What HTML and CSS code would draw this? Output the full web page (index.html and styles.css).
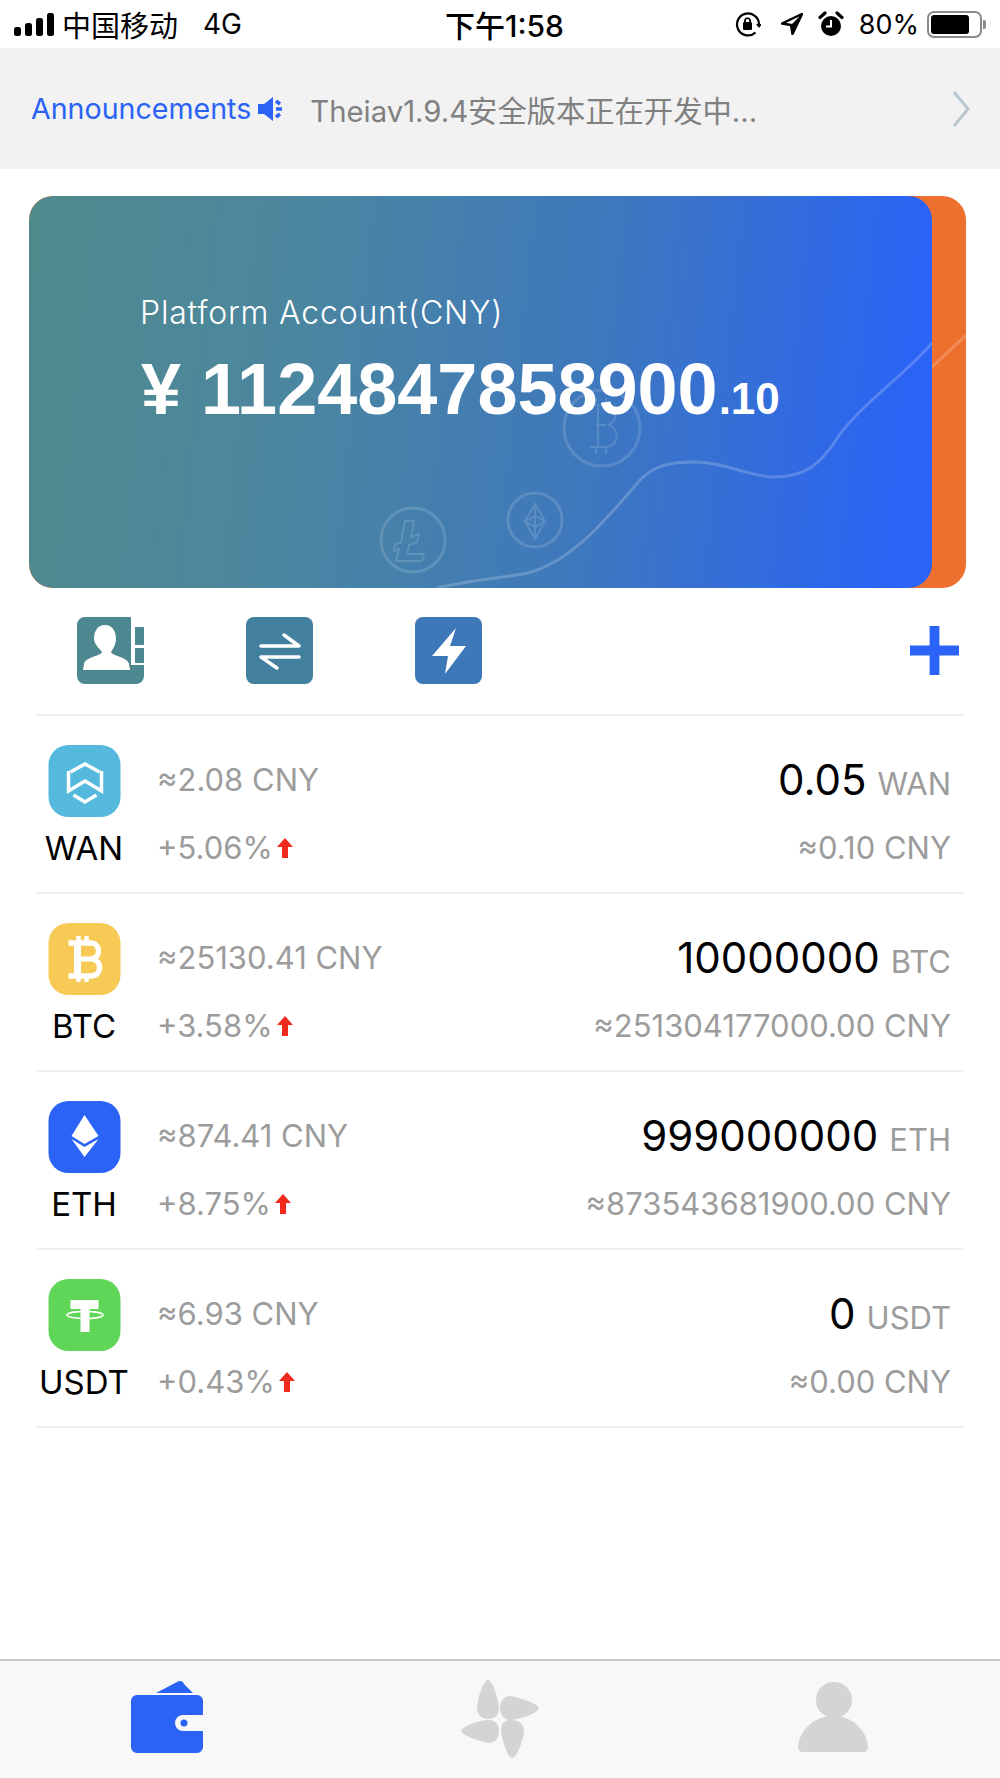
FILE: index.html
```html
<!DOCTYPE html>
<html lang="zh">
<head>
<meta charset="utf-8">
<title>Wallet</title>
<link rel="stylesheet" href="styles.css">
</head>
<body>
<div class="app">
  <header class="status">
    <div class="status-left">
      <svg class="signal" viewBox="0 0 40 23"><rect x="0" y="14" width="7" height="9" rx="2.500"/><rect x="11" y="10" width="7" height="13" rx="2.500"/><rect x="22" y="5" width="7" height="18" rx="2.500"/><rect x="33" y="0" width="7" height="23" rx="2.500"/></svg>
      <span class="carrier">中国移动</span>
      <span class="net">4G</span>
    </div>
    <div class="time">下午1:58</div>
    <div class="status-right">
      <svg class="s-ico lockrot" viewBox="0 0 26 26"><path d="M20.500 21.500A11 11 0 1 1 24 13" fill="none" stroke="#000" stroke-width="2.200"/><path d="M21 13h6l-3 4z" fill="#000"/><rect x="8" y="11" width="9" height="8" rx="1.200" fill="#000"/><path d="M10 11V9a2.600 2.600 0 0 1 5 0v2" fill="none" stroke="#000" stroke-width="1.800"/></svg>
      <svg class="s-ico arrow" viewBox="0 0 22 22"><path d="M21 1 1 10.500l9 1.500 1.500 9z" fill="none" stroke="#000" stroke-width="2.400" stroke-linejoin="round"/><path d="M21 1 10 12l1.500 9z" fill="#000"/></svg>
      <svg class="s-ico alarm" viewBox="0 0 26 26"><circle cx="13" cy="15" r="10" fill="#000"/><path d="M13 9v6.500H8" fill="none" stroke="#fff" stroke-width="2"/><path d="M2 6.500 7 2M24 6.500 19 2" stroke="#000" stroke-width="3.200" stroke-linecap="round"/></svg>
      <span class="pct">80%</span>
      <div class="battery"><div class="battery-fill"></div></div>
      <div class="battery-nub"></div>
    </div>
  </header>

  <section class="notice">
    <span class="notice-title">Announcements</span>
    <svg class="speaker" viewBox="0 0 28 24"><path d="M0 7h6l9-7v24l-9-7H0z" fill="#2a63f5"/><path d="M18 4l4 3M18 12h6M18 20l4-3" stroke="#2a63f5" stroke-width="3.500" fill="none"/></svg>
    <span class="notice-text">Theiav1.9.4安全版本正在开发中...</span>
    <svg class="chev" viewBox="0 0 18 36"><path d="M2 1l14 17L2 35" fill="none" stroke="#b9c8d0" stroke-width="3"/></svg>
  </section>

  <section class="card">
    <svg class="card-art" viewBox="29 196 937 392"><path class="art-line" d="M932 367L966 335"/></svg>
    <div class="card-front">
      <div class="card-label">Platform Account(CNY)</div>
      <div class="card-amount"><span>¥ 1124847858900</span><span class="cents">.10</span></div>
    </div>
    <svg class="card-art" viewBox="29 196 937 392">
      <path class="art-line" d="M437 588C470 580 500 578 523 574C570 565 610 515 640 480C655 465 670 462 695 462C725 462 750 477 774 477C805 477 820 465 838 437C860 405 905 375 932 343"/>
      <g class="art-coin">
        <circle cx="602" cy="428" r="38"/>
        <path d="M590 405h16c12 0 12 18 2 20c12 2 12 22-3 22h-15M598 405v42M596 398v7M606 398v7M596 447v7M606 447v7M596 425h10"/>
      </g>
      <g class="art-coin">
        <circle cx="535" cy="520" r="27"/>
        <path d="M535 504l-10 17 10 18 10-18zM525 521l10-5 10 5-10 6zM535 504v35"/>
      </g>
      <g class="art-coin">
        <circle cx="413" cy="540" r="32"/>
        <path d="M405 521h9l-3 16 8-3-2 8-8 3-2 9h17l-2 7h-26l3-12-5 2 1-6 6-3z"/>
      </g>
    </svg>
  </section>

  <nav class="actions">
    <svg class="act" viewBox="0 0 67 67"><path d="M8 0h46v48h13v11a8 8 0 0 1-8 8H8a8 8 0 0 1-8-8V8a8 8 0 0 1 8-8z" fill="#4d878f"/><rect x="58" y="10" width="9" height="18" fill="#4d878f"/><rect x="58" y="31" width="9" height="15" fill="#4d878f"/><path d="M28 8c8 0 11 7 11 14 0 5-3 10-5 13 1 4 17 5 18 12l1 6H6l1-6c1-7 17-8 18-12-2-3-8-8-8-13 0-7 3-14 11-14z" fill="#fff"/></svg>
    <svg class="act" viewBox="0 0 67 67"><rect width="67" height="67" rx="8" fill="#43809f"/><path d="M15 29h38L38 18M53 40H15l16 11" fill="none" stroke="#fff" stroke-width="3.500" stroke-linecap="round" stroke-linejoin="round"/></svg>
    <svg class="act" viewBox="0 0 67 67"><rect width="67" height="67" rx="8" fill="#3d78b8"/><path d="M41 11 17 39H33L30 57 51 29H35z" fill="#fff"/></svg>
    <svg class="plus" viewBox="0 0 50 50"><path d="M20 0h10v20h20v10H30v20H20V30H0V20h20z" fill="#2a63f5"/></svg>
  </nav>

  <main class="list">
    <article class="row">
      <div class="coin">
        <svg class="coin-ico" viewBox="0 0 72 72"><rect width="72" height="72" rx="20" fill="#54b9dc"/><g fill="none" stroke="#fff" stroke-width="3.500"><path d="M22 27 36.500 19 51 27"/><path d="M20 26V46L36.500 36 53 46V26"/><path d="M25 50 36.500 57 48 50"/></g></svg>
        <div class="coin-name">WAN</div>
      </div>
      <div class="mid"><div class="line">≈2.08 CNY</div><div class="line">+5.06%<svg class="up" viewBox="0 0 16 20"><path d="M8 0l8 9h-5v11H5V9H0z"/></svg></div></div>
      <div class="right"><div class="qty">0.05<span class="unit">WAN</span></div><div class="line">≈0.10 CNY</div></div>
    </article>
    <article class="row">
      <div class="coin">
        <svg class="coin-ico" viewBox="0 0 72 72"><rect width="72" height="72" rx="20" fill="#f7c955"/><path d="M20 20h22c10 0 11 14 1 16 11 1 11 17-1 17H20" fill="none" stroke="#fff" stroke-width="5.500"/><path d="M29 20v33" stroke="#fff" stroke-width="7" fill="none"/><path d="M30 36h13" stroke="#fff" stroke-width="5" fill="none"/><path d="M30 13v7M38 13v7M30 53v6M38 53v6" stroke="#fff" stroke-width="4.500" fill="none"/></svg>
        <div class="coin-name">BTC</div>
      </div>
      <div class="mid"><div class="line">≈25130.41 CNY</div><div class="line">+3.58%<svg class="up" viewBox="0 0 16 20"><path d="M8 0l8 9h-5v11H5V9H0z"/></svg></div></div>
      <div class="right"><div class="qty">10000000<span class="unit">BTC</span></div><div class="line">≈251304177000.00 CNY</div></div>
    </article>
    <article class="row">
      <div class="coin">
        <svg class="coin-ico" viewBox="0 0 72 72"><rect width="72" height="72" rx="20" fill="#2a63f5"/><path d="M36 14 50 35 36 43 23 35z" fill="#fff"/><path d="M23 38 36 46 50 38 36 56z" fill="#fff"/></svg>
        <div class="coin-name">ETH</div>
      </div>
      <div class="mid"><div class="line">≈874.41 CNY</div><div class="line">+8.75%<svg class="up" viewBox="0 0 16 20"><path d="M8 0l8 9h-5v11H5V9H0z"/></svg></div></div>
      <div class="right"><div class="qty">999000000<span class="unit">ETH</span></div><div class="line">≈873543681900.00 CNY</div></div>
    </article>
    <article class="row">
      <div class="coin">
        <svg class="coin-ico" viewBox="0 0 72 72"><rect width="72" height="72" rx="20" fill="#60d658"/><path d="M22 21h28v9H41v23h-9V30H22z" fill="#fff"/><ellipse cx="36.500" cy="36" rx="18" ry="3.500" fill="none" stroke="#fff" stroke-width="1.500"/></svg>
        <div class="coin-name">USDT</div>
      </div>
      <div class="mid"><div class="line">≈6.93 CNY</div><div class="line">+0.43%<svg class="up" viewBox="0 0 16 20"><path d="M8 0l8 9h-5v11H5V9H0z"/></svg></div></div>
      <div class="right"><div class="qty">0<span class="unit">USDT</span></div><div class="line">≈0.00 CNY</div></div>
    </article>
  </main>

  <footer class="tabs">
    <div class="tab">
      <svg class="tab-wallet" viewBox="130 1680 74 74"><path d="M156 1693l21-11c3-2 6-1 7 2l9 9z" fill="#2a63f5"/><path d="M137 1695h60a6 6 0 0 1 6 6v14h-20a8 8 0 0 0 0 16h20v16a6 6 0 0 1-6 6h-60a6 6 0 0 1-6-6v-46a6 6 0 0 1 6-6z" fill="#2a63f5"/><circle cx="184" cy="1723" r="3.500" fill="#2a63f5"/></svg>
    </div>
    <div class="tab">
      <svg class="tab-fan" viewBox="461 1678 78 78"><g fill="#d4d4d4"><path d="M488 1678c5 0 11 22 11 29 0 6-4 10-11 10-7 0-11-5-11-11 0-7 6-28 11-28z"/><path d="M500 1706c0-7 4-12 10-12 8 1 29 8 29 12 0 5-21 12-29 12-6 0-10-5-10-12z"/><path d="M499 1729c0 7-4 12-10 12-8-1-28-8-28-12 0-5 20-11 28-11 6 0 10 4 10 11z"/><path d="M512 1756c-5 0-11-22-11-29 0-6 4-9 11-9 7 0 12 4 12 11 0 7-7 27-12 27z"/></g></svg>
    </div>
    <div class="tab">
      <svg class="tab-user" viewBox="797 1682 70 70"><g fill="#d4d4d4"><ellipse cx="833" cy="1700" rx="18" ry="18"/><path d="M833 1716c20 0 33 16 34 31 0 3-2 5-4 5h-62c-2 0-4-2-4-5 1-15 14-31 36-31z"/></g></svg>
    </div>
  </footer>
</div>
</body>
</html>
```

FILE: styles.css
```css
* { box-sizing: border-box; }
html, body { margin: 0; padding: 0; background: #fff; }
body { font-family: Inter, "Noto Sans CJK SC", sans-serif; color: #000; }
.app { width: 1000px; height: 1778px; display: flex; flex-direction: column; overflow: hidden; }

.status { height: 48px; display: grid; grid-template-columns: 445px auto 1fr; align-items: center; font-size: 27px; padding: 0 14px 0 0; }
.status-left { display: flex; align-items: center; padding-left: 14px; }
.signal { width: 40px; height: 23px; fill: #000; margin-right: 8px; }
.carrier { font-size: 29px; font-family: "Noto Sans CJK SC", sans-serif; line-height: 48px; }
.net { margin-left: 25px; font-size: 28px; }
.time { font-weight: 500; font-size: 30px; font-family: Inter, "Noto Sans CJK SC", sans-serif; }
.status-right { display: flex; align-items: center; justify-content: flex-end; }
.s-ico { display: block; }
.lockrot { width: 26px; height: 26px; margin-right: 20px; }
.arrow { width: 22px; height: 22px; margin-right: 15px; }
.alarm { width: 26px; height: 26px; margin-right: 15px; }
.pct { font-size: 27px; margin-right: 8px; }
.battery { width: 55px; height: 27px; border: 2px solid #8a8a8a; border-radius: 7px; padding: 2px; }
.battery-fill { width: 80%; height: 100%; background: #000; border-radius: 3px; }
.battery-nub { width: 3px; height: 9px; background: #8a8a8a; border-radius: 0 2px 2px 0; margin-left: 1px; }

.notice { height: 121px; background: #f2f2f2; display: flex; align-items: center; padding: 0 30px 0 31px; font-size: 28.6px; }
.notice-title { color: #2a63f5; }
.speaker { width: 28px; height: 24px; margin-left: 7px; }
.notice-text { color: #808080; margin-left: 24px; flex: 1; font-size: 29.3px; }
.chev { width: 18px; height: 36px; }

.card { position: relative; margin: 27px 34px 0 29px; height: 392px; background: #ed702e; border-radius: 24px; overflow: hidden; flex: none; }
.card-front { width: 903px; height: 392px; border-radius: 24px; background: linear-gradient(96deg, #508a8c 0%, #4b86a0 30%, #3e78bd 62%, #2a63f5 96%); padding: 95px 0 0 111px; color: #fff; position: relative; }
.card-label { font-size: 32px; line-height: 44px; font-weight: 300; letter-spacing: .8px; }
.card-amount { font-family: "Liberation Sans", Arial, sans-serif; font-weight: 700; font-size: 72px; line-height: 80px; margin-top: 14px; margin-left: 1px; white-space: nowrap; }
.cents { font-size: 44px; margin-left: 1px; }
.card-art { position: absolute; left: 0; top: 0; width: 937px; height: 392px; }
.art-line { fill: none; stroke: rgba(255,255,255,.2); stroke-width: 3; }
.art-coin { fill: none; stroke: rgba(255,255,255,.14); stroke-width: 2; }
.art-coin circle { stroke-width: 3; }

.actions { height: 126px; flex: none; display: flex; align-items: flex-start; gap: 102px; padding: 29px 41px 0 77px; }
.act { width: 67px; height: 67px; display: block; }
.plus { width: 49px; height: 49px; margin: 9px 0 0 auto; display: block; }

.list { flex: 1; padding: 0 36px; }
.row { height: 178px; border-top: 2px solid #efefef; display: grid; grid-template-columns: 96px 1fr auto; padding: 29px 13px 0 0; }
.row:last-child { height: 180px; border-bottom: 2px solid #efefef; }
.coin { display: flex; flex-direction: column; align-items: center; }
.coin-ico { width: 73px; height: 72px; display: block; }
.coin-name { font-size: 33px; line-height: 62px; }
.mid { padding: 1px 0 0 25px; }
.line { font-size: 31px; line-height: 68px; color: #9c9c9c; display: flex; align-items: center; white-space: nowrap; }
.right { display: flex; flex-direction: column; align-items: flex-end; padding-top: 1px; }
.qty { height: 68px; font-size: 42px; line-height: 68px; white-space: nowrap; }
.unit { font-size: 31px; color: #9c9c9c; margin-left: 11px; }
.up { width: 16px; height: 20px; fill: #f02a1c; margin-left: 4px; }

.tabs { height: 119px; flex: none; background: #f8f8f8; border-top: 2px solid #c9c9c9; display: grid; grid-template-columns: 1fr 1fr 1fr; }
.tab { display: flex; justify-content: center; padding-top: 19px; }
.tab-wallet { width: 74px; height: 74px; }
.tab-fan { width: 78px; height: 78px; }
.tab-user { width: 70px; height: 70px; margin-top: 2px; }
```
